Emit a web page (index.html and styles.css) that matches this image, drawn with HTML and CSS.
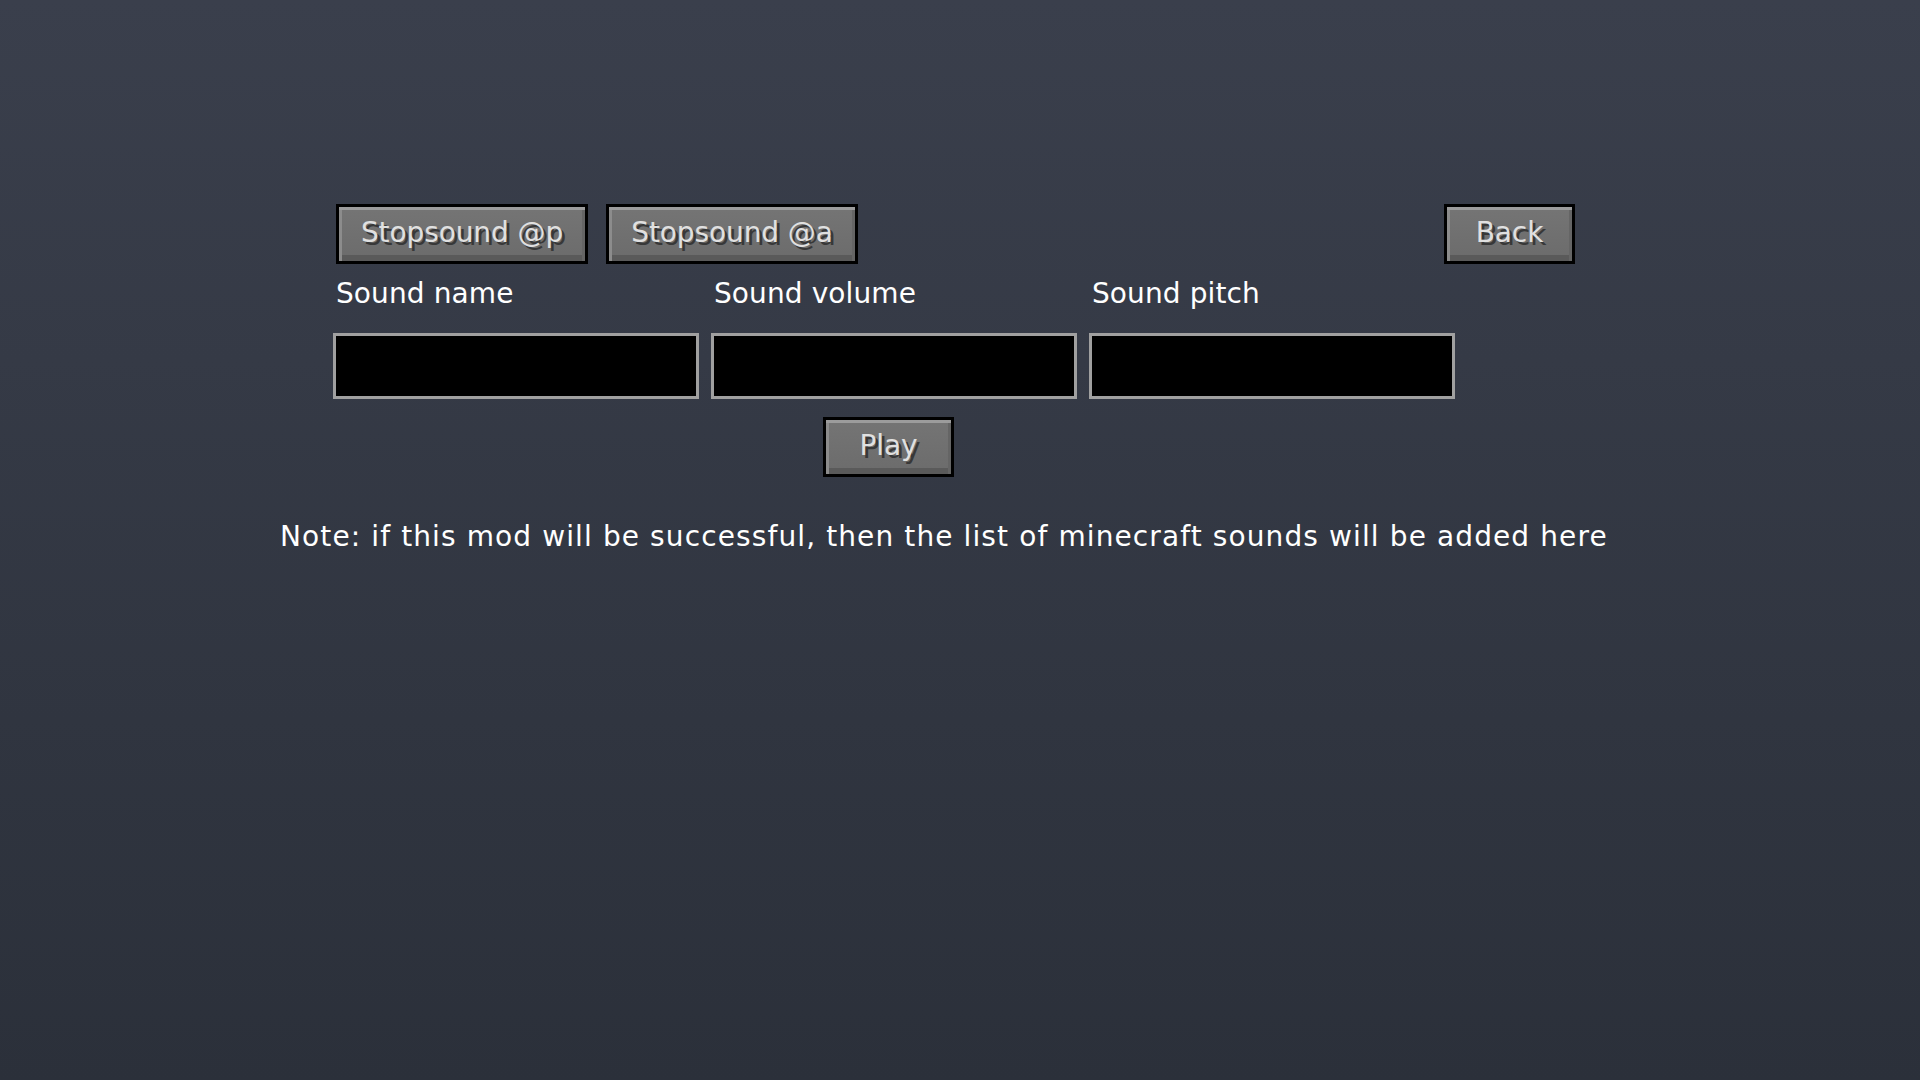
FILE: index.html
```html
<!DOCTYPE html>
<html lang="en">
<head>
<meta charset="utf-8">
<title>Sound Player</title>
<link rel="stylesheet" href="styles.css">
</head>
<body>
<main class="screen">
  <div class="toolbar">
    <button class="mc-btn wide">Stopsound @p</button>
    <button class="mc-btn wide">Stopsound @a</button>
    <div class="spacer"></div>
    <button class="mc-btn small">Back</button>
  </div>
  <div class="field-grid">
    <label class="field-label" for="name">Sound name</label>
    <label class="field-label" for="volume">Sound volume</label>
    <label class="field-label" for="pitch">Sound pitch</label>
    <input class="mc-input" id="name" type="text">
    <input class="mc-input" id="volume" type="text">
    <input class="mc-input" id="pitch" type="text">
  </div>
  <div class="play-row">
    <button class="mc-btn small">Play</button>
  </div>
  <p class="note">Note: if this mod will be successful, then the list of minecraft sounds will be added here</p>
</main>
</body>
</html>
```
FILE: styles.css
```css
html, body {
  margin: 0;
  padding: 0;
}
body {
  width: 1920px;
  height: 1080px;
  overflow: hidden;
  background: linear-gradient(180deg, #3a3f4c 0%, #2b303a 100%);
  font-family: "DejaVu Sans", "Liberation Sans", sans-serif;
  font-size: 28px;
  color: #ffffff;
}
.screen {
  padding-top: 204px;
}
.toolbar {
  display: flex;
  gap: 18px;
  margin-left: 336px;
  width: 1239px;
}
.spacer {
  flex: 1;
}
.mc-btn {
  box-sizing: border-box;
  height: 60px;
  border: 3px solid #000000;
  background-color: #707070;
  background-image: linear-gradient(180deg, rgba(255,255,255,0.03), rgba(0,0,0,0.04));
  box-shadow:
    inset 0 3px 0 #9c9c9c,
    inset 3px 0 0 #8c8c8c,
    inset -3px 0 0 #656565,
    inset 0 -6px 0 #5a5a5a;
  color: #e0e0e0;
  font-family: "DejaVu Sans", "Liberation Sans", sans-serif;
  font-size: 28px;
  line-height: 24px;
  letter-spacing: -0.1px;
  text-shadow: 3px 3px 0 #383838;
  padding: 0 0 3px 0;
  display: flex;
  align-items: center;
  justify-content: center;
  cursor: pointer;
}
.mc-btn.wide {
  width: 252px;
}
.mc-btn.small {
  width: 131px;
}
.field-grid {
  display: grid;
  grid-template-columns: repeat(3, 366px);
  column-gap: 12px;
  row-gap: 27px;
  margin-left: 333px;
  margin-top: 18px;
}
.field-label {
  padding-left: 3px;
  line-height: 24px;
  letter-spacing: 0.1px;
  color: #ffffff;
}
.mc-input {
  box-sizing: border-box;
  width: 366px;
  height: 66px;
  margin: 0;
  border: 3px solid #a0a0a0;
  background: #000000;
  color: #e0e0e0;
  outline: none;
  padding: 0 10px;
  font-family: "DejaVu Sans", "Liberation Sans", sans-serif;
  font-size: 28px;
}
.play-row {
  display: flex;
  margin-left: 823px;
  margin-top: 18px;
}
.note {
  margin: 48px 0 0 280px;
  line-height: 24px;
  letter-spacing: 1.11px;
  white-space: nowrap;
  color: #ffffff;
}
```
